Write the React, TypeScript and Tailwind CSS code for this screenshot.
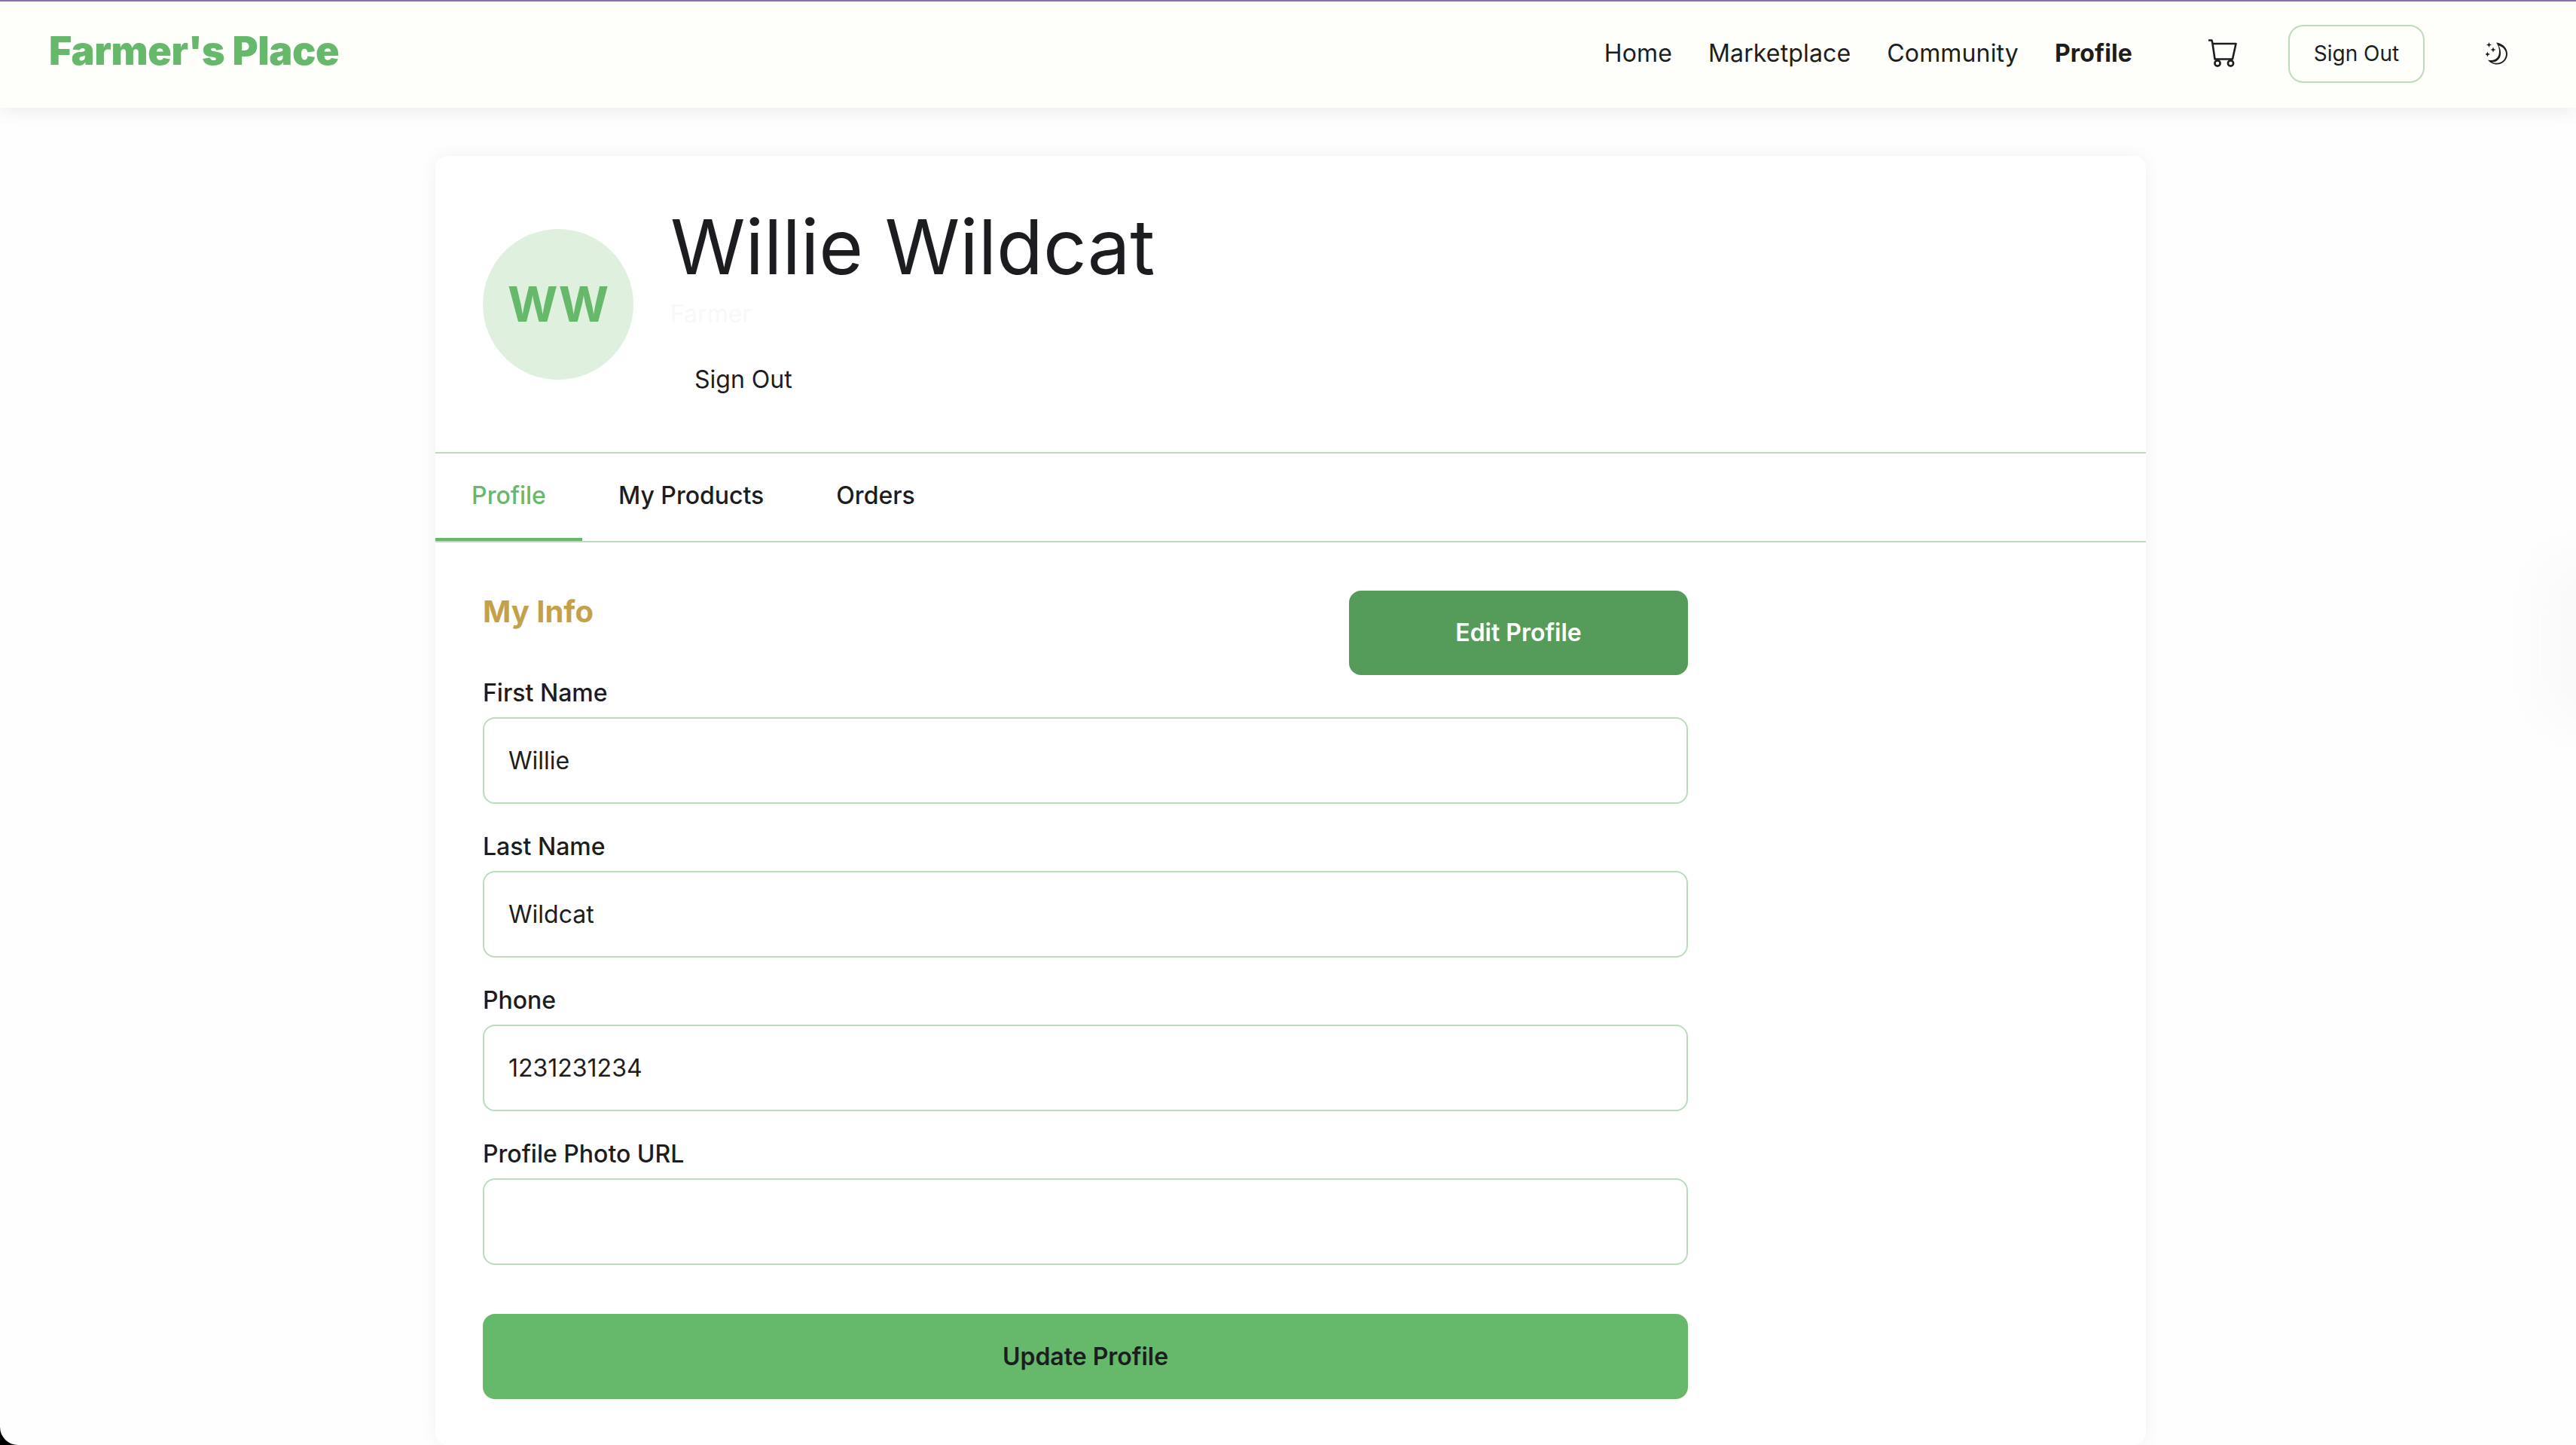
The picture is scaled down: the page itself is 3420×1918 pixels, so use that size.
import React from 'react';

const fields = [
  { label: 'First Name', value: 'Willie' },
  { label: 'Last Name', value: 'Wildcat' },
  { label: 'Phone', value: '1231231234' },
  { label: 'Profile Photo URL', value: '' },
];

function CartIcon() {
  return (
    <svg width="38" height="38" viewBox="0 0 38 38" fill="none" stroke="#1c1d21" strokeWidth="2.6" strokeLinejoin="round">
      <path d="M0 1.500h4.500l1 4.500 3 20.500h23.500L36.500 6H5.500" />
      <circle cx="12" cy="32" r="3.6" />
      <circle cx="29.500" cy="32" r="3.6" />
    </svg>
  );
}

function MoonIcon() {
  return (
    <svg width="30" height="30" viewBox="0 0 30 30" fill="#1c1d21">
      <path d="M14 0.500C23 1.500 29 8 29 15.500C29 23.500 22.500 29.500 15 29.500C10 29.500 5.500 27 3 23.500C8.500 25 14 23.500 16.500 19C19 14.500 18.500 6 14 0.500ZM17.500 4.500C21 11 20.500 18 18.500 21C15.500 25.500 12 26.500 8 26.500C10 27.500 12.500 27.800 15 27.800C21.500 27.800 27 22.500 27 15.500C27 10.500 23 6 17.500 4.500Z" />
      <path d="M2.500 0l1 2.500 2.500 1-2.500 1-1 2.500-1-2.500L-1 3.500l2.500-1zM8 6.500l1 2.500 2.500 1-2.500 1-1 2.500-1-2.500-2.500-1 2.500-1zM0.500 12.500l1 2.500 2.500 1-2.500 1-1 2.500-1-2.500-2.500-1 2.500-1z" transform="translate(2 0)" />
    </svg>
  );
}

export default function App() {
  return (
    <div className="h-[1918px] overflow-hidden bg-black font-['Inter',sans-serif] text-[32px] text-[#1c1d21]">
      <div className="relative h-full overflow-hidden rounded-bl-[24px] bg-[#fefefe]">
        {/* Navbar */}
        <header className="relative z-10 flex h-[143px] items-center justify-between border-t-2 border-[#8a6fb3] bg-[#fefffb] pb-[3px] pl-[65px] pr-[90px] shadow-[0_4px_24px_rgba(0,0,0,0.08)]">
          <div className="mb-[6px] text-[52px] font-black leading-none tracking-[-0.3px] text-[#66b96a]">Farmer's Place</div>
          <div className="flex items-center">
            <nav className="flex items-center gap-[48px] tracking-[0.15px]">
              <span>Home</span>
              <span>Marketplace</span>
              <span>Community</span>
              <span className="font-bold">Profile</span>
            </nav>
            <div className="ml-[101px] flex items-center">
              <CartIcon />
            </div>
            <button className="ml-[68px] h-[77px] w-[181px] rounded-[20px] border-2 border-[#bbdcbb] text-[28px]">Sign Out</button>
            <div className="ml-[81px] flex items-center">
              <MoonIcon />
            </div>
          </div>
        </header>

        {/* Faint glow on the right edge */}
        <div className="absolute right-[-70px] top-[733px] h-[234px] w-[120px] rounded-full bg-[#f9f9f9] blur-xl" />

        {/* Card */}
        <main className="relative ml-[578px] mt-[64px] h-[1711px] w-[2271px] rounded-[16px] bg-white shadow-[0_0_24px_rgba(0,0,0,0.06)]">
          <section className="flex h-[395px] items-center gap-[49px] border-b-2 border-[#bbdcbb] px-[63px]">
            <div className="flex size-[200px] shrink-0 items-center justify-center rounded-full bg-[#dff0df] text-[64px] font-bold text-[#66b96a]">WW</div>
            <div className="flex flex-col items-start">
              <h1 className="text-[101px] font-normal leading-[122px]">Willie Wildcat</h1>
              <p className="mt-[5px] text-[32px] leading-[48px] text-[#f8f8f8]">Farmer</p>
              <button className="mt-[25px] h-[76px] px-[32px] text-[32px]">Sign Out</button>
            </div>
          </section>

          <div className="flex h-[118px] border-b-2 border-[#bbdcbb]">
            <div className="flex w-[195px] items-center justify-center border-b-4 border-[#66b96a] font-medium text-[#66b96a]">Profile</div>
            <div className="flex items-center px-[48px] pb-[4px] font-medium">My Products</div>
            <div className="flex items-center px-[48px] pb-[4px] font-medium">Orders</div>
          </div>

          <form className="ml-[63px] w-[1600px] pt-[64px]">
            <div className="flex h-[114px] items-start justify-between">
              <h2 className="pt-[2px] text-[40px] font-bold leading-[52px] text-[#c3a14a]">My Info</h2>
              <button type="button" className="h-[112px] w-[450px] rounded-[16px] bg-[#559c5a] font-semibold text-white">Edit Profile</button>
            </div>
            {fields.map((f) => (
              <div key={f.label} className="mb-[35px]">
                <label className="mb-[10px] block font-medium leading-[44px]">{f.label}</label>
                <input
                  readOnly
                  value={f.value}
                  className="block h-[115px] w-full rounded-[16px] border-2 border-[#bbdcbb] bg-white px-[32px] outline-none"
                />
              </div>
            ))}
            <button type="button" className="mt-[30px] h-[113px] w-full rounded-[16px] bg-[#66b96a] font-semibold">Update Profile</button>
          </form>
        </main>
      </div>
    </div>
  );
}
